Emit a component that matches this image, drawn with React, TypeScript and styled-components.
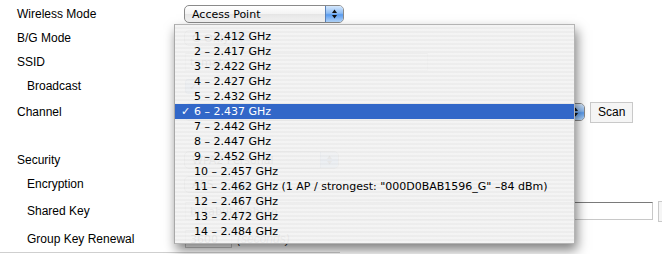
import styled, { createGlobalStyle } from "styled-components";

const GlobalStyle = createGlobalStyle`
    html, body {
        margin: 0;
        padding: 0;
        background: #ffffff;
        overflow: hidden;
    }
`

const Page = styled.div`
    position: relative;
    width: 662px;
    height: 254px;
    overflow: hidden;
    background: #ffffff;
    font-family: "Liberation Sans", Arial, sans-serif;
    font-size: 12px;
    color: #000;
`

const Form = styled.div`
    display: flex;
    flex-direction: column;
    padding: 2px 0 0 17px;
`

const Row = styled.div<{ $h: number }>`
    display: grid;
    grid-template-columns: 167px auto;
    align-items: center;
    height: ${p => p.$h}px;
`

const Label = styled.span<{ $indent?: boolean }>`
    padding-left: ${p => (p.$indent ? 10 : 0)}px;
    white-space: nowrap;
`

const Cell = styled.div`
    display: flex;
    align-items: center;
    gap: 5px;
    white-space: nowrap;
`

const Rule = styled.div`
    width: 340px;
    border-top: 1px solid #cfcfcf;
`

const Popup = styled.div<{ $w: number; $h?: number }>`
    display: flex;
    align-items: stretch;
    box-sizing: border-box;
    width: ${p => p.$w}px;
    height: ${p => p.$h ?? 18}px;
    border: 1px solid #8a8a8a;
    border-radius: 5px;
    background: linear-gradient(#ffffff, #f3f3f3 50%, #e6e6e6 51%, #f6f6f6);
    font-family: "DejaVu Sans", sans-serif;
    font-size: 11px;
    overflow: hidden;
`

const PopupValue = styled.span`
    flex: 1;
    display: flex;
    align-items: center;
    padding-left: 7px;
`

const Stepper = styled.span`
    width: 17px;
    display: flex;
    align-items: center;
    justify-content: center;
    border-left: 1px solid #5a82b8;
    background: linear-gradient(#d5e8fd, #8dbcf4 45%, #5a9cf0 55%, #b5d8fd);
`

const TextInput = styled.div<{ $w: number }>`
    box-sizing: border-box;
    width: ${p => p.$w}px;
    height: 18px;
    display: flex;
    align-items: center;
    padding-left: 4px;
    border: 1px solid #c8c8c8;
    border-top-color: #7a7a7a;
    background: #fff;
    font-family: "DejaVu Sans", sans-serif;
    font-size: 11px;
    color: #000;
`

const Checkbox = styled.span`
    width: 13px;
    height: 13px;
    border-radius: 3px;
    border: 1px solid #5a82b8;
    background: linear-gradient(#d5e8fd, #7fb3f2 50%, #b5d8fd);
    display: flex;
    align-items: center;
    justify-content: center;
    font-size: 10px;
    margin-left: 1px;
`

const Button = styled.div`
    box-sizing: border-box;
    height: 21px;
    padding: 0 7px;
    display: flex;
    align-items: center;
    border: 1px solid #c9c9c9;
    background: #f5f5f5;
    font-size: 12px;
`

const Hint = styled.span`
    font-style: italic;
    color: #333;
`

const Menu = styled.div`
    position: absolute;
    left: 174px;
    top: 24px;
    width: 401px;
    box-sizing: border-box;
    padding: 4px 0;
    border: 1px solid #b4b4b4;
    border-left-color: #a8a8a8;
    background: repeating-linear-gradient(
        to bottom,
        rgba(243, 243, 243, 0.95) 0px,
        rgba(243, 243, 243, 0.95) 2px,
        rgba(236, 236, 236, 0.95) 2px,
        rgba(236, 236, 236, 0.95) 4px
    );
    box-shadow: 2px 6px 11px rgba(0, 0, 0, 0.5);
    font-family: "DejaVu Sans", sans-serif;
    font-size: 11px;
`

const Item = styled.div<{ $selected?: boolean }>`
    display: grid;
    grid-template-columns: 19px auto;
    align-items: center;
    height: 15px;
    white-space: nowrap;
    color: ${p => (p.$selected ? "#ffffff" : "#000000")};
    background: ${p => (p.$selected ? "#3267c8" : "transparent")};
`

const Check = styled.span`
    padding-left: 6px;
    font-size: 11px;
`

const Arrows = () => (
    <svg width="7" height="10" viewBox="0 0 7 10">
        <path d="M3.5 0.5 L6 4 L1 4 Z" fill="#111" />
        <path d="M3.5 9.5 L6 6 L1 6 Z" fill="#111" />
    </svg>
);

const channels = [
    "1 – 2.412 GHz",
    "2 – 2.417 GHz",
    "3 – 2.422 GHz",
    "4 – 2.427 GHz",
    "5 – 2.432 GHz",
    "6 – 2.437 GHz",
    "7 – 2.442 GHz",
    "8 – 2.447 GHz",
    "9 – 2.452 GHz",
    "10 – 2.457 GHz",
    "11 – 2.462 GHz (1 AP / strongest: \"000D0BAB1596_G\" –84 dBm)",
    "12 – 2.467 GHz",
    "13 – 2.472 GHz",
    "14 – 2.484 GHz",
];

const App = () => {
    const selected = 5;

    return (
        <Page>
            <GlobalStyle />
            <Form>
                <Row $h={24}>
                    <Label>Wireless Mode</Label>
                    <Cell>
                        <Popup $w={160}>
                            <PopupValue>Access Point</PopupValue>
                            <Stepper><Arrows /></Stepper>
                        </Popup>
                    </Cell>
                </Row>
                <Row $h={24}>
                    <Label>B/G Mode</Label>
                    <Cell>
                        <Popup $w={67} $h={16}>
                            <PopupValue>G Only</PopupValue>
                            <Stepper><Arrows /></Stepper>
                        </Popup>
                    </Cell>
                </Row>
                <Row $h={24}>
                    <Label>SSID</Label>
                    <Cell>
                        <TextInput $w={243} style={{ marginLeft: 1 }}>tomato</TextInput>
                    </Cell>
                </Row>
                <Row $h={24}>
                    <Label $indent>Broadcast</Label>
                    <Cell>
                        <Checkbox>✓</Checkbox>
                    </Cell>
                </Row>
                <Row $h={28}>
                    <Label>Channel</Label>
                    <Cell>
                        <Popup $w={401}>
                            <PopupValue>6 – 2.437 GHz</PopupValue>
                            <Stepper><Arrows /></Stepper>
                        </Popup>
                        <Button>Scan</Button>
                    </Cell>
                </Row>
                <Row $h={22} />
                <Row $h={24}>
                    <Label>Security</Label>
                    <Cell>
                        <Popup $w={155}>
                            <PopupValue>WPA2 Personal</PopupValue>
                            <Stepper><Arrows /></Stepper>
                        </Popup>
                    </Cell>
                </Row>
                <Row $h={24}>
                    <Label $indent>Encryption</Label>
                    <Cell>
                        <Popup $w={67} $h={17}>
                            <PopupValue>AES</PopupValue>
                            <Stepper><Arrows /></Stepper>
                        </Popup>
                    </Cell>
                </Row>
                <Row $h={30}>
                    <Label $indent>Shared Key</Label>
                    <Cell>
                        <TextInput $w={468} style={{ marginLeft: 1 }}>butabutakobuto</TextInput>
                        <Button>Random</Button>
                    </Cell>
                </Row>
                <Row $h={26}>
                    <Label $indent>Group Key Renewal</Label>
                    <Cell>
                        <TextInput $w={47} style={{ marginLeft: 1 }}>3600</TextInput>
                        <Hint>(seconds)</Hint>
                    </Cell>
                </Row>
            </Form>
            <Rule />
            <Menu>
                {channels.map((c, i) => (
                    <Item key={c} $selected={i === selected}>
                        <Check>{i === selected ? "✓" : ""}</Check>
                        <span>{c}</span>
                    </Item>
                ))}
            </Menu>
        </Page>
    );
};

export default App;
